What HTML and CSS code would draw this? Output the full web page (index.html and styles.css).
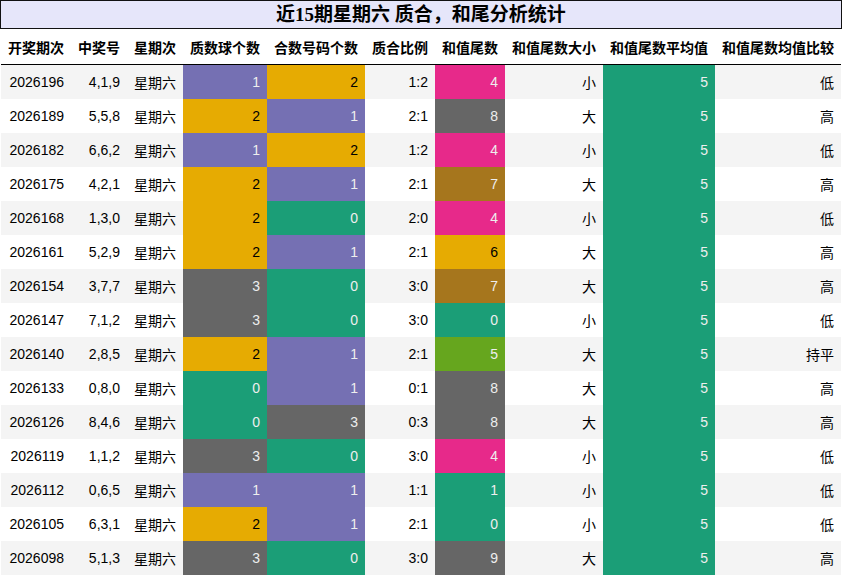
FILE: index.html
```html
<!DOCTYPE html>
<html lang="zh">
<head>
<meta charset="utf-8">
<title>近15期星期六 质合，和尾分析统计</title>
<link rel="stylesheet" href="styles.css">
</head>
<body>
<div class="page">
  <h1 class="title">近15期星期六 质合，和尾分析统计</h1>
  <table class="stats">
    <thead>
      <tr>
        <th>开奖期次</th><th>中奖号</th><th>星期次</th><th>质数球个数</th><th>合数号码个数</th><th>质合比例</th><th>和值尾数</th><th>和值尾数大小</th><th>和值尾数平均值</th><th>和值尾数均值比较</th>
      </tr>
    </thead>
    <tbody>
      <tr><td>2026196</td><td>4,1,9</td><td>星期六</td><td class="c1">1</td><td class="c2">2</td><td>1:2</td><td class="c4">4</td><td>小</td><td class="c0">5</td><td>低</td></tr>
      <tr><td>2026189</td><td>5,5,8</td><td>星期六</td><td class="c2">2</td><td class="c1">1</td><td>2:1</td><td class="c8">8</td><td>大</td><td class="c0">5</td><td>高</td></tr>
      <tr><td>2026182</td><td>6,6,2</td><td>星期六</td><td class="c1">1</td><td class="c2">2</td><td>1:2</td><td class="c4">4</td><td>小</td><td class="c0">5</td><td>低</td></tr>
      <tr><td>2026175</td><td>4,2,1</td><td>星期六</td><td class="c2">2</td><td class="c1">1</td><td>2:1</td><td class="c7">7</td><td>大</td><td class="c0">5</td><td>高</td></tr>
      <tr><td>2026168</td><td>1,3,0</td><td>星期六</td><td class="c2">2</td><td class="c0">0</td><td>2:0</td><td class="c4">4</td><td>小</td><td class="c0">5</td><td>低</td></tr>
      <tr><td>2026161</td><td>5,2,9</td><td>星期六</td><td class="c2">2</td><td class="c1">1</td><td>2:1</td><td class="c6">6</td><td>大</td><td class="c0">5</td><td>高</td></tr>
      <tr><td>2026154</td><td>3,7,7</td><td>星期六</td><td class="c3">3</td><td class="c0">0</td><td>3:0</td><td class="c7">7</td><td>大</td><td class="c0">5</td><td>高</td></tr>
      <tr><td>2026147</td><td>7,1,2</td><td>星期六</td><td class="c3">3</td><td class="c0">0</td><td>3:0</td><td class="c0">0</td><td>小</td><td class="c0">5</td><td>低</td></tr>
      <tr><td>2026140</td><td>2,8,5</td><td>星期六</td><td class="c2">2</td><td class="c1">1</td><td>2:1</td><td class="c5">5</td><td>大</td><td class="c0">5</td><td>持平</td></tr>
      <tr><td>2026133</td><td>0,8,0</td><td>星期六</td><td class="c0">0</td><td class="c1">1</td><td>0:1</td><td class="c8">8</td><td>大</td><td class="c0">5</td><td>高</td></tr>
      <tr><td>2026126</td><td>8,4,6</td><td>星期六</td><td class="c0">0</td><td class="c3">3</td><td>0:3</td><td class="c8">8</td><td>大</td><td class="c0">5</td><td>高</td></tr>
      <tr><td>2026119</td><td>1,1,2</td><td>星期六</td><td class="c3">3</td><td class="c0">0</td><td>3:0</td><td class="c4">4</td><td>小</td><td class="c0">5</td><td>低</td></tr>
      <tr><td>2026112</td><td>0,6,5</td><td>星期六</td><td class="c1">1</td><td class="c1">1</td><td>1:1</td><td class="c0">1</td><td>小</td><td class="c0">5</td><td>低</td></tr>
      <tr><td>2026105</td><td>6,3,1</td><td>星期六</td><td class="c2">2</td><td class="c1">1</td><td>2:1</td><td class="c0">0</td><td>小</td><td class="c0">5</td><td>低</td></tr>
      <tr><td>2026098</td><td>5,1,3</td><td>星期六</td><td class="c3">3</td><td class="c0">0</td><td>3:0</td><td class="c8">9</td><td>大</td><td class="c0">5</td><td>高</td></tr>
    </tbody>
  </table>
</div>
</body>
</html>
```

FILE: styles.css
```css
html, body {
  margin: 0;
  padding: 0;
  background: #ffffff;
}

.page {
  width: 842px;
}

.title {
  margin: 0;
  height: 27px;
  line-height: 28px;
  border: 1px solid #111;
  background: #e6e6fa;
  text-align: center;
  font-family: "Liberation Serif", "Noto Sans CJK SC", serif;
  font-size: 19px;
  font-weight: bold;
  color: #000;
}

.stats {
  margin: 0 1px;
  border-collapse: separate;
  border-spacing: 0;
  font-family: "Liberation Sans", "Noto Sans CJK SC", sans-serif;
  font-size: 14px;
  color: #000;
}

.stats th {
  height: 35px;
  padding: 0 7px;
  border-bottom: 1px solid #000;
  font-weight: bold;
  text-align: center;
  white-space: nowrap;
  background: #fff;
}

.stats td {
  height: 34px;
  padding: 0 7px;
  text-align: right;
  white-space: nowrap;
}

.stats tbody tr:nth-child(odd) {
  background: #f4f4f4;
}

.stats tbody tr:nth-child(even) {
  background: #ffffff;
}

.stats td.c0 { background: #1b9e77; color: #eeeeee; }
.stats td.c1 { background: #7570b3; color: #eeeeee; }
.stats td.c2 { background: #e6ab02; color: #000000; }
.stats td.c3 { background: #666666; color: #eeeeee; }
.stats td.c4 { background: #e7298a; color: #eeeeee; }
.stats td.c5 { background: #66a61e; color: #eeeeee; }
.stats td.c6 { background: #e6ab02; color: #000000; }
.stats td.c7 { background: #a6761d; color: #eeeeee; }
.stats td.c8 { background: #666666; color: #eeeeee; }
```
